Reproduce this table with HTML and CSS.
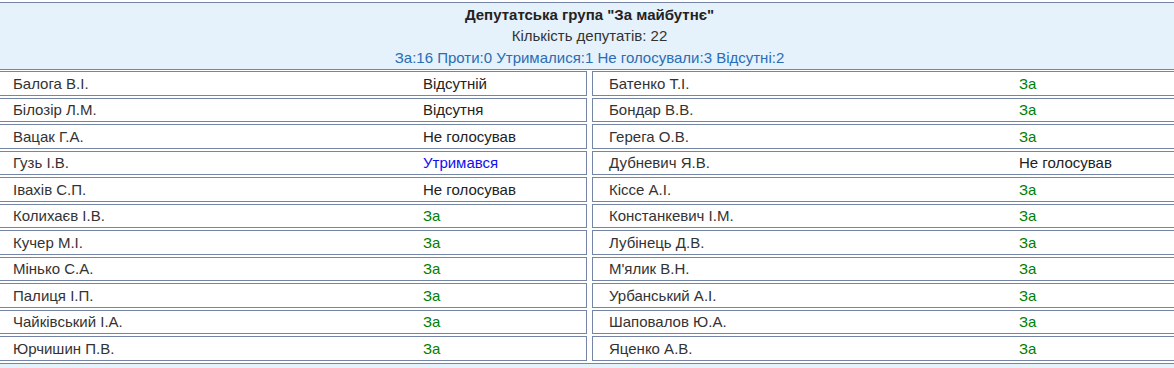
FILE: index.html
```html
<!DOCTYPE html>
<html lang="uk">
<head>
<meta charset="utf-8">
<title>Депутатська група "За майбутнє"</title>
<link rel="stylesheet" href="styles.css">
</head>
<body>
<div class="wrap">
  <div class="group-head">
    <div class="title">Депутатська група "За майбутнє"</div>
    <div class="count">Кількість депутатів: 22</div>
    <div class="stats">За:16 Проти:0 Утрималися:1 Не голосували:3 Відсутні:2</div>
  </div>
  <div class="grid">
    <div class="cell"><span class="name">Балога В.І.</span><span class="vote">Відсутній</span></div>
    <div class="cell"><span class="name">Батенко Т.І.</span><span class="vote yes">За</span></div>
    <div class="cell"><span class="name">Білозір Л.М.</span><span class="vote">Відсутня</span></div>
    <div class="cell"><span class="name">Бондар В.В.</span><span class="vote yes">За</span></div>
    <div class="cell"><span class="name">Вацак Г.А.</span><span class="vote">Не голосував</span></div>
    <div class="cell"><span class="name">Герега О.В.</span><span class="vote yes">За</span></div>
    <div class="cell"><span class="name">Гузь І.В.</span><span class="vote abst">Утримався</span></div>
    <div class="cell"><span class="name">Дубневич Я.В.</span><span class="vote">Не голосував</span></div>
    <div class="cell"><span class="name">Івахів С.П.</span><span class="vote">Не голосував</span></div>
    <div class="cell"><span class="name">Кіссе А.І.</span><span class="vote yes">За</span></div>
    <div class="cell"><span class="name">Колихаєв І.В.</span><span class="vote yes">За</span></div>
    <div class="cell"><span class="name">Констанкевич І.М.</span><span class="vote yes">За</span></div>
    <div class="cell"><span class="name">Кучер М.І.</span><span class="vote yes">За</span></div>
    <div class="cell"><span class="name">Лубінець Д.В.</span><span class="vote yes">За</span></div>
    <div class="cell"><span class="name">Мінько С.А.</span><span class="vote yes">За</span></div>
    <div class="cell"><span class="name">М'ялик В.Н.</span><span class="vote yes">За</span></div>
    <div class="cell"><span class="name">Палиця І.П.</span><span class="vote yes">За</span></div>
    <div class="cell"><span class="name">Урбанський А.І.</span><span class="vote yes">За</span></div>
    <div class="cell"><span class="name">Чайківський І.А.</span><span class="vote yes">За</span></div>
    <div class="cell"><span class="name">Шаповалов Ю.А.</span><span class="vote yes">За</span></div>
    <div class="cell"><span class="name">Юрчишин П.В.</span><span class="vote yes">За</span></div>
    <div class="cell"><span class="name">Яценко А.В.</span><span class="vote yes">За</span></div>
  </div>
  <div class="group-head next"></div>
</div>
</body>
</html>
```

FILE: styles.css
```css
html, body {
  margin: 0;
  padding: 0;
  overflow: hidden;
  background: #ffffff;
}

body {
  font-family: "Liberation Sans", Arial, sans-serif;
  font-size: 15px;
  color: #333333;
}

.wrap {
  margin-left: -4px;
  width: 1187px;
  padding-top: 2px;
}

.group-head {
  box-sizing: border-box;
  height: 68px;
  border: 1px solid #7585a5;
  background: #e5f1fb;
  text-align: center;
  padding: 0.5px 0 1px;
  line-height: 21.5px;
}

.title {
  font-weight: bold;
  color: #222222;
}

.count {
  color: #333333;
}

.stats {
  color: #2a6db5;
}

.grid {
  display: grid;
  grid-template-columns: 591px 591px;
  column-gap: 5px;
  row-gap: 2px;
  margin-top: 1px;
}

.cell {
  box-sizing: border-box;
  height: 24.5px;
  border: 1px solid #7585a5;
  padding-left: 16px;
  display: flex;
  align-items: center;
  white-space: nowrap;
}

.name {
  width: 410px;
  flex: none;
}

.vote {
  color: #222222;
}

.vote.yes {
  color: #008000;
}

.vote.abst {
  color: #1010ee;
}

.next {
  margin-top: 2px;
}
```
